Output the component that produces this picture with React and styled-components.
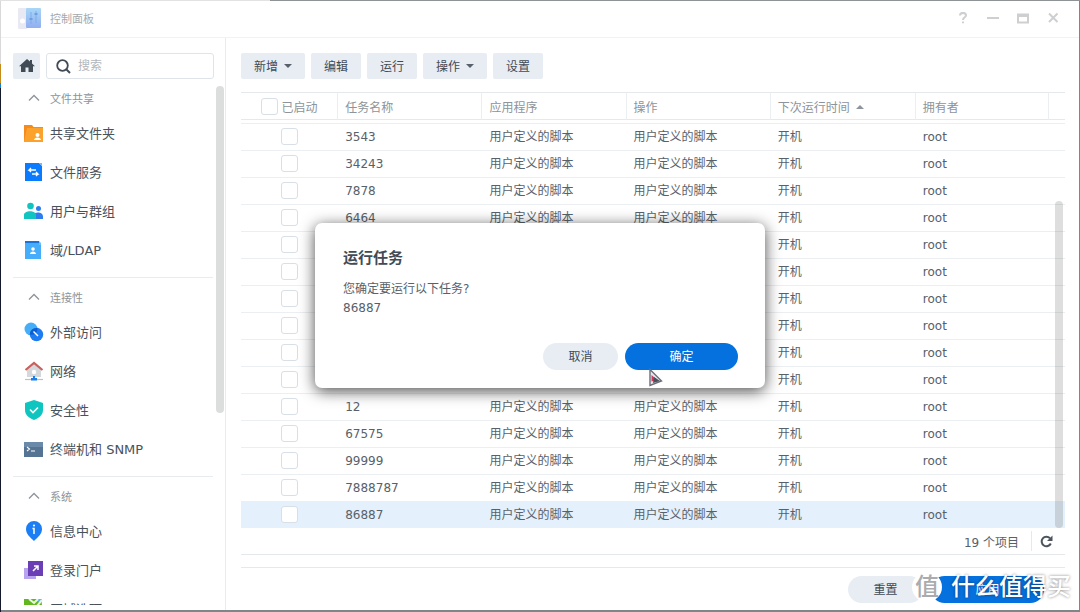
import React from "react";
import styled, { createGlobalStyle } from "styled-components";

const sections = [
  {
    title: "文件共享",
    items: [
      { name: "共享文件夹", icon: "folder" },
      { name: "文件服务", icon: "service" },
      { name: "用户与群组", icon: "users" },
      { name: "域/LDAP", icon: "ldap" },
    ],
  },
  {
    title: "连接性",
    items: [
      { name: "外部访问", icon: "external" },
      { name: "网络", icon: "network" },
      { name: "安全性", icon: "shield" },
      { name: "终端机和 SNMP", icon: "terminal" },
    ],
  },
  {
    title: "系统",
    items: [
      { name: "信息中心", icon: "info" },
      { name: "登录门户", icon: "portal" },
      { name: "区域选项", icon: "region" },
    ],
  },
];

const tasks = [
  "3543", "34243", "7878", "6464", "5345", "4234", "6456", "789",
  "3453", "123", "12", "67575", "99999", "7888787", "86887",
];

const icons = {
  folder: (
    <>
      <path d="M0 2h8l1.500 2H19v3H0z" fill="#f58a1f" />
      <path d="M0 5h19v14H0z" fill="#fba22c" />
      <path d="M0 19V5h3z" fill="#f58a1f" />
      <circle cx="13.500" cy="12" r="2" fill="#fff" />
      <path d="M10 17c0-3.500 7-3.500 7 0z" fill="#fff" />
    </>
  ),
  service: (
    <>
      <path d="M1 1h14l3 3v15H1z" fill="#0a7bff" />
      <path d="M15 1h3v3z" fill="#6cbcff" />
      <path d="M12 8H5l2-2M5 8l2 2M8 12h6l-2-2M14 12l-2 2" fill="none" stroke="#fff" strokeWidth="1.3" />
    </>
  ),
  users: (
    <>
      <circle cx="6.500" cy="5" r="3.300" fill="#12c4bf" />
      <circle cx="14.500" cy="7.500" r="2.500" fill="#2d7df0" />
      <path d="M9 18v-4c1-3 10-4 10 2v2z" fill="#2d7df0" />
      <path d="M0 18v-4c0-5 12-5 12 0v4z" fill="#12c4bf" />
    </>
  ),
  ldap: (
    <>
      <path d="M1 1h14v3H1z" fill="#1a73d9" />
      <path d="M1 3h16v16H1z" fill="#45adf9" />
      <path d="M15 1l2 2v2h-2z" fill="#63c3ff" />
      <circle cx="9" cy="9" r="1.800" fill="#fff" />
      <path d="M6 14c0-3.500 6-3.500 6 0z" fill="#fff" />
    </>
  ),
  external: (
    <>
      <circle cx="7" cy="7" r="6.500" fill="#46aef8" />
      <circle cx="12.500" cy="12.500" r="6.700" fill="#1d7cf2" />
      <path d="M5.800 12.500A6.700 6.700 0 0 1 13.400 6C13.800 10 10.500 13.800 5.800 12.500z" fill="#0b5fd0" />
      <path d="M9.500 9.500l4.500 4.500" stroke="#fff" strokeWidth="1.400" />
    </>
  ),
  network: (
    <>
      <path d="M3 8l7-6 7 6v8H3z" fill="#d5d8db" />
      <path d="M1.500 9L10 2l8.500 7" fill="none" stroke="#c9605c" strokeWidth="2.200" />
      <circle cx="10" cy="11" r="2.200" fill="#fff" />
      <path d="M1 18.500h18" stroke="#b9c2cc" strokeWidth="1.200" />
      <path d="M9 15h2v2h2v2.500H7V17h2z" fill="#1b80e8" />
    </>
  ),
  shield: (
    <>
      <path d="M10 0l9 3v7c0 5-4 8-9 10-5-2-9-5-9-10V3z" fill="#0fc5bf" />
      <path d="M6 9.500l3 3 5-5" fill="none" stroke="#fff" strokeWidth="1.700" />
    </>
  ),
  terminal: (
    <>
      <path d="M0 3h19v15H0z" fill="#557493" />
      <path d="M0 3h19v5H0z" fill="#6b8aaa" />
      <path d="M3 8l2.500 2L3 12M7 12h4" fill="none" stroke="#fff" strokeWidth="1.100" />
    </>
  ),
  info: (
    <>
      <path d="M10 0a8 8 0 0 1 8 8c0 5-4 8-8 12C6 16 2 13 2 8a8 8 0 0 1 8-8z" fill="#1b7ef5" />
      <circle cx="10" cy="4.500" r="1.100" fill="#fff" />
      <path d="M8.500 7.500H10v5.500" fill="none" stroke="#fff" strokeWidth="1.500" />
    </>
  ),
  portal: (
    <>
      <path d="M0 8h12v11H0z" fill="#b8a3ee" />
      <path d="M4 1h15v15H4z" fill="#6a3fb5" />
      <path d="M9 11l5-5M10 6h4v4" fill="none" stroke="#fff" strokeWidth="1.500" />
    </>
  ),
  region: (
    <>
      <path d="M0 0h18v18H0z" fill="#62b721" />
      <path d="M12 0h6v6z" fill="#58b6f3" />
      <path d="M5 0l5 4 4-4M13 7l5-6" fill="none" stroke="#e9f6dd" strokeWidth="2" />
    </>
  ),
};

function App() {
  return (
    <Desktop>
      <GlobalStyle />
      <Window>
        <TitleBar>
          <svg width="23" height="21" viewBox="0 0 23 21">
            <defs>
              <linearGradient id="panel" x1="0" y1="0" x2="0" y2="1">
                <stop offset="0" stopColor="#a9d6f8" />
                <stop offset="1" stopColor="#93aef0" />
              </linearGradient>
            </defs>
            <rect x="0" y="0" width="9" height="21" rx="1" fill="#e8e9f3" />
            <rect x="8" y="0" width="15" height="20" rx="1" fill="url(#panel)" />
            <circle cx="4.500" cy="13" r="2.500" fill="#fff" />
            <path d="M13 4v12M18 3v12" stroke="#7badea" />
            <path d="M11.500 11h3M16.500 6h3" stroke="#6a9fe2" strokeWidth="2" />
          </svg>
          <Title>控制面板</Title>
          <WindowButton aria-label="帮助">
            <svg width="12" height="12" viewBox="0 0 12 12">
              <path d="M3 3.500C3 0 9 0 9 3.500 9 5.500 6 5 6 8M6 9.500v1.800" />
            </svg>
          </WindowButton>
          <WindowButton aria-label="最小化">
            <svg width="12" height="12" viewBox="0 0 12 12">
              <path d="M0 6h12" />
            </svg>
          </WindowButton>
          <WindowButton aria-label="最大化">
            <svg width="12" height="12" viewBox="0 0 12 12">
              <path d="M1 2v8.500h10V2M0 2.500h12M0 4h12" />
            </svg>
          </WindowButton>
          <WindowButton aria-label="关闭">
            <svg width="12" height="12" viewBox="0 0 12 12">
              <path d="M2 1.500l8.500 8.500M10.500 1.500L2 10" />
            </svg>
          </WindowButton>
        </TitleBar>
        <Body>
          <Sidebar>
            <SearchRow>
              <HomeButton aria-label="主页">
                <svg width="16" height="14" viewBox="0 0 16 14">
                  <path d="M8 0l3 2.600V1h2v3.400L16 7.200h-2V13H9.500V8.500h-3V13H2V7.200H0z" fill="#414b55" />
                </svg>
              </HomeButton>
              <SearchBox>
                <svg width="15" height="15" viewBox="0 0 15 15">
                  <circle cx="6.500" cy="6.500" r="5.300" fill="none" stroke="#414b55" strokeWidth="1.800" />
                  <path d="M10.500 10.500l3.500 3.500" stroke="#414b55" strokeWidth="2" />
                </svg>
                <input type="text" placeholder="搜索" aria-label="搜索" />
              </SearchBox>
            </SearchRow>
            <NavArea>
              <Nav>
                {sections.map((section) => (
                  <Section key={section.title}>
                    <SectionHeader>
                      <svg width="12" height="8" viewBox="0 0 12 8">
                        <path d="M1 6.500l5-5 5 5" fill="none" stroke="#8d949b" strokeWidth="1.300" />
                      </svg>
                      {section.title}
                    </SectionHeader>
                    {section.items.map((item) => (
                      <NavItem href="#" key={item.name}>
                        <svg width="20" height="20" viewBox="0 0 20 20">{icons[item.icon]}</svg>
                        {item.name}
                      </NavItem>
                    ))}
                  </Section>
                ))}
              </Nav>
              <NavTrack>
                <NavThumb />
              </NavTrack>
            </NavArea>
          </Sidebar>
          <Content>
            <Toolbar>
              <ToolButton>新增<Caret /></ToolButton>
              <ToolButton>编辑</ToolButton>
              <ToolButton>运行</ToolButton>
              <ToolButton>操作<Caret /></ToolButton>
              <ToolButton>设置</ToolButton>
            </Toolbar>
            <TableArea>
              <Table>
                <colgroup>
                  <col style={{ width: "11.8%" }} />
                  <col style={{ width: "17.5%" }} />
                  <col style={{ width: "17.5%" }} />
                  <col style={{ width: "17.5%" }} />
                  <col style={{ width: "17.6%" }} />
                  <col style={{ width: "16.2%" }} />
                  <col />
                </colgroup>
                <thead>
                  <tr>
                    <HeadCell>
                      <CheckLabel>
                        <Check type="checkbox" />
                        已启动
                      </CheckLabel>
                    </HeadCell>
                    <HeadCell>任务名称</HeadCell>
                    <HeadCell>应用程序</HeadCell>
                    <HeadCell>操作</HeadCell>
                    <HeadCell>下次运行时间<Caret $up /></HeadCell>
                    <HeadCell>拥有者</HeadCell>
                    <HeadCell />
                  </tr>
                </thead>
                <tbody>
                  <HiddenRow aria-hidden="true">
                    <td colSpan="7" />
                  </HiddenRow>
                  {tasks.map((task) => (
                    <Row key={task} $selected={task === "86887"}>
                      <CheckCell>
                        <Check type="checkbox" aria-label={task} />
                      </CheckCell>
                      <Cell>{task}</Cell>
                      <Cell>用户定义的脚本</Cell>
                      <Cell>用户定义的脚本</Cell>
                      <Cell>开机</Cell>
                      <Cell>root</Cell>
                      <Cell />
                    </Row>
                  ))}
                </tbody>
              </Table>
              <TableThumb />
            </TableArea>
            <Paging>
              <span>19 个项目</span>
              <RefreshButton aria-label="刷新">
                <svg width="13" height="13" viewBox="0 0 13 13">
                  <path d="M10.800 8.500A4.800 4.800 0 1 1 10 3.200" fill="none" stroke="#4b545d" strokeWidth="2" />
                  <path d="M12.500 0.500v5.500H7z" fill="#4b545d" />
                </svg>
              </RefreshButton>
            </Paging>
            <Footer>
              <PillButton>重置</PillButton>
              <PillButton $primary>应用</PillButton>
            </Footer>
          </Content>
        </Body>
      </Window>
      <Overlay>
        <Dialog role="dialog" aria-labelledby="dialog-title">
          <h2 id="dialog-title">运行任务</h2>
          <p>您确定要运行以下任务?</p>
          <p>86887</p>
          <DialogButtons>
            <PillButton>取消</PillButton>
            <PillButton $primary>确定</PillButton>
          </DialogButtons>
          <Pointer width="16" height="20" viewBox="0 0 16 20">
            <path d="M2 1.500l11.500 11.500L2 17.500z" fill="#e6e8ee" stroke="#6b6e78" strokeWidth="1.400" />
            <path d="M3.500 7l6 5-6 1.500z" fill="#cf3a60" />
            <path d="M6 9l6 4-7 2z" fill="#4c4f58" />
          </Pointer>
        </Dialog>
      </Overlay>
      <Watermark>
        <Badge>值</Badge>
        什么值得买
      </Watermark>
    </Desktop>
  );
}

export default App;

const GlobalStyle = createGlobalStyle`
  * {
    box-sizing: border-box;
  }
  body {
    margin: 0;
    font-family: "DejaVu Sans", "Noto Sans CJK SC", sans-serif;
    font-size: 12px;
    color: #58616a;
  }
  button, input {
    font-family: inherit;
    font-size: inherit;
    color: inherit;
  }
  button {
    border: none;
    padding: 0;
    cursor: pointer;
  }
`;

const Desktop = styled.div`
  position: relative;
  height: 100vh;
  padding: 1px 1px 2px;
  display: flex;
  background:
    linear-gradient(90deg, #e2e2e2 25%, #8f9396 25%) top / 100% 1px no-repeat,
    linear-gradient(#d9d9d9 64px, #c48a1c 64px, #c48a1c 83px, #1b7fc0 83px, #1b7fc0 88px, #141a2c 88px) left / 1px 100% no-repeat,
    #7d8688;
`;

const Window = styled.div`
  flex: 1;
  min-width: 0;
  display: flex;
  flex-direction: column;
  background: #fff;
`;

const TitleBar = styled.header`
  display: flex;
  align-items: center;
  height: 37px;
  padding: 0 20px 2px 17px;
  border-bottom: 1px solid #f0f2f4;
  flex-shrink: 0;
`;

const Title = styled.h1`
  flex: 1;
  margin: 0 0 0 9px;
  font-size: 11px;
  font-weight: normal;
  color: #a5a9ad;
`;

const WindowButton = styled.button`
  width: 12px;
  height: 12px;
  margin-left: 18px;
  background: none;
  svg {
    display: block;
    fill: none;
    stroke: #cdcfd1;
    stroke-width: 2;
  }
`;

const Body = styled.div`
  flex: 1;
  min-height: 0;
  display: flex;
`;

const Sidebar = styled.aside`
  width: 225px;
  flex-shrink: 0;
  display: flex;
  flex-direction: column;
  padding: 15px 0 5px 12px;
  border-right: 1px solid #e9ecef;
`;

const SearchRow = styled.div`
  display: flex;
  gap: 6px;
  padding-right: 11px;
`;

const HomeButton = styled.button`
  width: 27px;
  height: 26px;
  display: grid;
  place-items: center;
  border-radius: 2px;
  background: #e8edf4;
`;

const SearchBox = styled.div`
  flex: 1;
  min-width: 0;
  display: flex;
  align-items: center;
  gap: 7px;
  height: 26px;
  padding: 0 9px;
  border: 1px solid #dfe4ea;
  border-radius: 3px;
  input {
    flex: 1;
    min-width: 0;
    border: none;
    outline: none;
    padding: 0;
    background: none;
  }
  input::placeholder {
    color: #b2b7bc;
  }
`;

const NavArea = styled.div`
  flex: 1;
  min-height: 0;
  display: flex;
  gap: 3px;
`;

const Nav = styled.nav`
  flex: 1;
  overflow: hidden;
`;

const Section = styled.section`
  padding: 5px 0 8px;
  border-bottom: 1px solid #e9ecef;
`;

const SectionHeader = styled.button`
  display: flex;
  align-items: center;
  gap: 10px;
  width: 100%;
  height: 29px;
  padding: 0 0 2px 15px;
  background: none;
  font-size: 11px;
  color: #8d949b;
`;

const NavItem = styled.a`
  display: flex;
  align-items: center;
  gap: 6px;
  height: 39px;
  padding-left: 11px;
  font-size: 13px;
  color: #48525c;
  text-decoration: none;
`;

const NavTrack = styled.div`
  width: 9px;
  padding: 7px 1px 0 0;
`;

const NavThumb = styled.div`
  height: 63%;
  border-radius: 4px;
  background: #dcdddd;
`;

const Content = styled.main`
  flex: 1;
  min-width: 0;
  display: flex;
  flex-direction: column;
  padding: 15px 14px 0 15px;
`;

const Toolbar = styled.div`
  display: flex;
  gap: 6px;
  margin-bottom: 13px;
`;

const ToolButton = styled.button`
  height: 26px;
  padding: 0 13px 2px;
  border-radius: 2px;
  background: #e8edf4;
  color: #414b55;
`;

const Caret = styled.span`
  display: inline-block;
  margin: 0 0 2px 6px;
  vertical-align: middle;
  border: 4px solid transparent;
  border-width: ${(props) => (props.$up ? "0 4px 4px" : "4px 4px 0")};
  border-top-color: ${(props) => (props.$up ? "transparent" : "#58616a")};
  border-bottom-color: ${(props) => (props.$up ? "#8d949b" : "transparent")};
`;

const TableArea = styled.div`
  position: relative;
  flex: 1;
  min-height: 0;
  overflow: hidden;
`;

const Table = styled.table`
  width: 100%;
  table-layout: fixed;
  border-collapse: separate;
  border-spacing: 0;
`;

const HeadCell = styled.th`
  height: 28px;
  padding: 0 7px;
  border-top: 1px solid #e6e9ec;
  border-bottom: 1px solid #e6e9ec;
  border-right: 1px solid #eceff1;
  text-align: left;
  font-weight: normal;
  color: #8d949b;
  white-space: nowrap;
  &:last-child {
    border-right: none;
  }
`;

const CheckLabel = styled.label`
  display: flex;
  align-items: center;
  justify-content: center;
  gap: 4px;
`;

const Check = styled.input`
  appearance: none;
  display: block;
  width: 17px;
  height: 17px;
  margin: 0;
  border: 1px solid #d9dfe7;
  border-radius: 3px;
  background: #fff;
`;

const HiddenRow = styled.tr`
  td {
    height: 4px;
    padding: 0;
    border-bottom: 1px solid #eceff1;
  }
`;

const Row = styled.tr`
  background: ${(props) => (props.$selected ? "#e4f0fb" : "#fff")};
  td {
    border-bottom: 1px solid ${(props) => (props.$selected ? "#e4f0fb" : "#eceff1")};
  }
`;

const Cell = styled.td`
  height: 27px;
  padding: 0 7px;
  line-height: 20px;
  white-space: nowrap;
`;

const CheckCell = styled(Cell)`
  padding-bottom: 2px;
  ${Check} {
    margin: 0 auto;
  }
`;

const TableThumb = styled.div`
  position: absolute;
  right: 2px;
  bottom: 0;
  width: 8px;
  height: 75%;
  border-radius: 4px;
  background: rgba(0, 0, 0, 0.13);
`;

const Paging = styled.div`
  display: flex;
  align-items: center;
  justify-content: flex-end;
  gap: 12px;
  height: 27px;
  border-bottom: 1px solid #e6e9ec;
`;

const RefreshButton = styled.button`
  height: 20px;
  padding: 0 12px 0 8px;
  border-left: 1px solid #e6e9ec;
  background: none;
  svg {
    display: block;
  }
`;

const Footer = styled.footer`
  display: flex;
  justify-content: flex-end;
  gap: 8px;
  margin-top: 12px;
  padding: 8px 21px 7px;
  border-top: 1px solid #e6e9ec;
`;

const PillButton = styled.button`
  width: ${(props) => (props.$primary ? "113px" : "75px")};
  height: 27px;
  padding-bottom: 2px;
  border-radius: 14px;
  background: ${(props) => (props.$primary ? "#0571de" : "#e8edf4")};
  color: ${(props) => (props.$primary ? "#fff" : "#414b55")};
`;

const Overlay = styled.div`
  position: absolute;
  inset: 0 0 2px;
  display: grid;
  place-items: center;
`;

const Dialog = styled.div`
  position: relative;
  width: 450px;
  padding: 24px 27px 18px 28px;
  border-radius: 7px;
  background: #fff;
  box-shadow: 0 3px 15px rgba(0, 0, 0, 0.7);
  h2 {
    margin: 0 0 11px;
    font-size: 15px;
    line-height: 22px;
    color: #414b55;
  }
  p {
    margin: 0;
    line-height: 19px;
  }
`;

const DialogButtons = styled.div`
  display: flex;
  justify-content: flex-end;
  gap: 7px;
  margin-top: 25px;
`;

const Pointer = styled.svg`
  position: absolute;
  left: 333px;
  top: 145px;
`;

const Watermark = styled.div`
  position: absolute;
  right: 9px;
  bottom: 8px;
  display: flex;
  align-items: center;
  gap: 9px;
  font-size: 24px;
  line-height: 34px;
  font-weight: 500;
  color: #fff;
  text-shadow: 0 0 3px rgba(0, 0, 0, 0.5);
`;

const Badge = styled.span`
  width: 30px;
  height: 30px;
  border-radius: 50%;
  background: #fff;
  text-align: center;
  line-height: 30px;
  color: #a9abad;
  text-shadow: none;
`;
